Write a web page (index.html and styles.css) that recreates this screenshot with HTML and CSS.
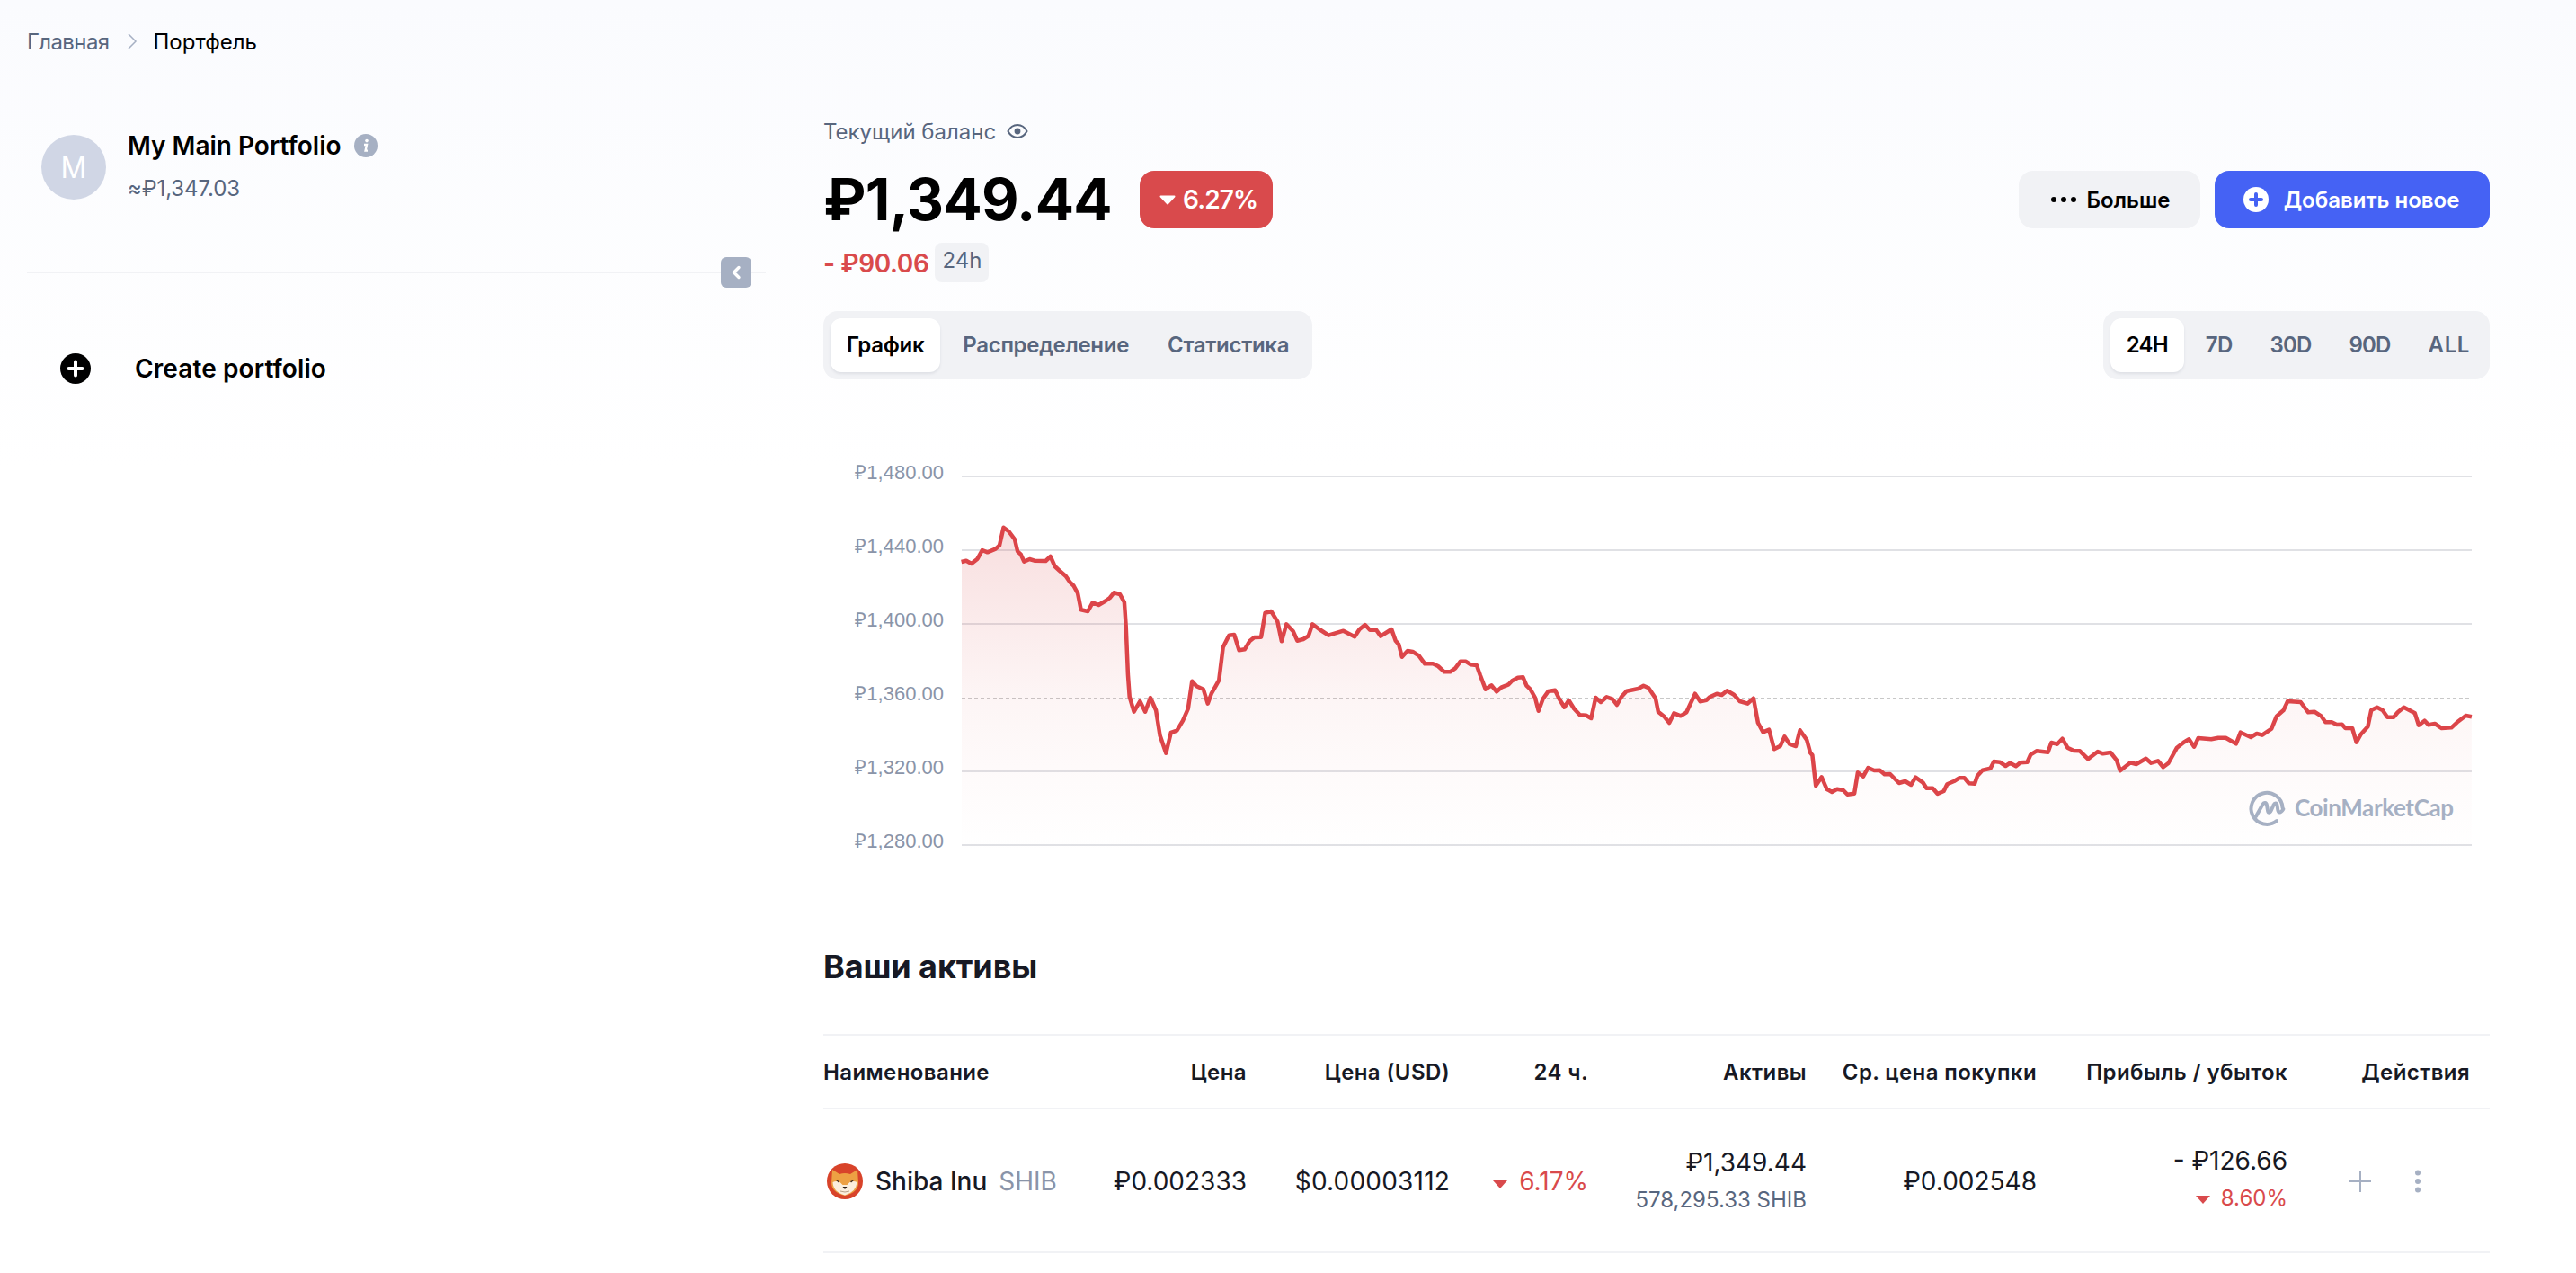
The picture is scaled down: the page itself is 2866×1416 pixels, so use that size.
FILE: index.html
```html
<!DOCTYPE html>
<html lang="ru">
<head>
<meta charset="utf-8">
<title>Портфель</title>
<link rel="stylesheet" href="styles.css">
</head>
<body>
<nav class="crumbs">
  <a class="crumb-link">Главная</a>
  <svg class="crumb-sep" viewBox="0 0 12 20"><path d="M2 2l8 8-8 8"/></svg>
  <span class="crumb-current">Портфель</span>
</nav>
<div class="layout">
  <aside class="sidebar">
    <div class="profile">
      <div class="avatar">M</div>
      <div class="profile-text">
        <div class="profile-name">My Main Portfolio
          <svg class="info" viewBox="0 0 26 26"><circle cx="13" cy="13" r="13"/><circle class="info-mark" cx="14" cy="7.6" r="1.8"/><path class="info-line" d="M11 12h3l-1.4 6.6h2.4"/></svg>
        </div>
        <div class="profile-value">≈₽1,347.03</div>
      </div>
    </div>
    <div class="divider">
      <button class="collapse"><svg viewBox="0 0 12 16"><path d="M9 2.5L3.5 8 9 13.5"/></svg></button>
    </div>
    <div class="create">
      <svg class="plus-circle" viewBox="0 0 34 34"><circle cx="17" cy="17" r="17"/><path d="M17 9.5v15M9.5 17h15"/></svg>
      <span>Create portfolio</span>
    </div>
  </aside>
  <main class="main">
    <div class="balance-label">Текущий баланс
      <svg class="eye" viewBox="0 0 24 18"><path d="M1.5 9C4 4.2 7.7 2 12 2s8 2.200 10.500 7C20 13.800 16.300 16 12 16S4 13.800 1.500 9z"/><circle cx="12" cy="9" r="3.400"/></svg>
    </div>
    <div class="balance-row">
      <div class="balance">₽1,349.44</div>
      <div class="badge"><svg class="tri" viewBox="0 0 20 13"><path d="M2.500 2.500h15L10 10.500z"/></svg>6.27%</div>
      <div class="actions">
        <button class="btn btn-more"><svg class="dots" viewBox="0 0 28 6"><circle cx="3" cy="3" r="3"/><circle cx="14" cy="3" r="3"/><circle cx="25" cy="3" r="3"/></svg>Больше</button>
        <button class="btn btn-add"><svg class="add-icon" viewBox="0 0 28 28"><circle cx="14" cy="14" r="14"/><path d="M14 8v12M8 14h12"/></svg>Добавить новое</button>
      </div>
    </div>
    <div class="change-row">
      <span class="change">- ₽90.06</span>
      <span class="chip">24h</span>
    </div>
    <div class="tabs-row">
      <div class="seg">
        <span class="seg-item seg-on">График</span>
        <span class="seg-item">Распределение</span>
        <span class="seg-item">Статистика</span>
      </div>
      <div class="seg seg-time">
        <span class="seg-item seg-on">24H</span>
        <span class="seg-item">7D</span>
        <span class="seg-item">30D</span>
        <span class="seg-item">90D</span>
        <span class="seg-item seg-all">ALL</span>
      </div>
    </div>
    <svg class="chart" viewBox="916 510 1854 450">
      <defs>
        <linearGradient id="areaFill" gradientUnits="userSpaceOnUse" x1="0" y1="587" x2="0" y2="950">
          <stop offset="0" stop-color="#d94a4c" stop-opacity=".18"/>
          <stop offset=".52" stop-color="#d94a4c" stop-opacity=".055"/>
          <stop offset=".75" stop-color="#d94a4c" stop-opacity=".025"/>
          <stop offset="1" stop-color="#d94a4c" stop-opacity="0"/>
        </linearGradient>
        <path id="priceLine" d="M1069.600 625L1075 623.700L1080.800 627L1087.500 621.700L1092.800 612L1098.600 614.300L1107.600 610.700L1112 606.700L1116.500 586.700L1122.300 591L1129 600L1132.100 613.300L1135.700 616.700L1139.300 624.700L1145.500 622L1150.900 623.700L1163.400 624L1168.700 619L1173.600 630L1179 635L1185.700 640.700L1190.200 647.300L1194.600 651.700L1199.100 660L1202.700 678.300L1210.300 680L1215.600 670.300L1222.300 673L1230.300 668.300L1234.800 665L1239.300 659.300L1246 661L1250.900 670L1252.700 696.700L1254.900 750L1256.700 775L1261.600 791.700L1268.300 780L1274.100 791.700L1279.900 776L1286.100 790L1290.600 818.300L1297.300 837.700L1302.700 815L1309.400 812.700L1316 801.700L1321.800 788.300L1326.300 757.700L1331.200 763.300L1338.800 766.700L1343.700 782.700L1347.700 771.700L1356.200 756.700L1360.700 720L1367.400 706.700L1373.200 706L1378.600 723.300L1384.800 722.300L1390.200 713.300L1395.500 709L1403.100 708.700L1407.600 681.700L1414.300 680L1421.400 691.700L1425.900 713.300L1431.200 694.300L1438.800 702.300L1443.300 712.700L1450 711L1455.800 707.300L1460.200 694.300L1467.900 700L1478.100 706.700L1494.600 701.700L1507.100 708.300L1512.500 700L1518.700 695L1524.100 700.700L1531.200 700.700L1536.100 707.700L1548.200 700L1552.700 712.700L1556.200 716.700L1559.800 730.700L1566 724L1571.800 725L1578.600 729.300L1585.200 738.300L1594.200 738.300L1600 741L1606.900 747.300L1613.400 747.300L1619.100 743.300L1624.900 735.700L1630.600 735.700L1636.400 739.300L1642.900 740L1646.700 750.700L1652.800 766.700L1659.300 762.300L1665.100 769.300L1670.800 764.300L1678.500 761.300L1682.300 757.300L1688.800 753.700L1694.500 753.300L1698.400 762.700L1702.600 766.700L1707.900 776L1711.700 790.700L1716.700 777.300L1722.500 769L1730.100 767.700L1734.700 777.300L1740.500 786.700L1745.400 779L1751.200 788.300L1757.700 795.300L1764.600 795.700L1770.300 799L1775.300 776L1781 781L1787.500 775.300L1794 777.700L1799 784L1804 775L1809.700 768.700L1818.100 767L1822.700 766L1828.500 762.700L1834.200 765.300L1841.900 776.700L1844.900 791.700L1851.800 797.300L1857.200 804L1862.500 793.300L1869.800 796.300L1876.300 792.300L1880.500 783.300L1885.900 771.700L1891.600 780.300L1898.500 778.700L1902.300 775.300L1910 771.700L1915.700 773L1921.500 768.300L1929.100 772.700L1935.600 780L1944.400 782.700L1950.900 776.700L1955.900 804L1961.600 814.300L1968.200 811.700L1973.900 833.300L1980.800 829.700L1985.400 819.300L1991.100 827.700L1998 830L2002.600 812.300L2010.300 823.300L2014.100 837.300L2016.400 840L2020.200 874L2026.700 864.300L2032.400 877.700L2038.200 881L2043.900 877.700L2050.800 879L2055.400 883.700L2063.100 882.700L2066.900 859.300L2073 863.700L2078.400 854L2085.300 857L2091.400 856.700L2096.700 861.300L2102.900 861L2112.800 871L2119.700 869L2126.200 873L2131.200 864.700L2139.600 870.700L2143.400 876.700L2150.300 876.700L2155.700 883L2162.600 880L2166.400 872.300L2174 869L2179.800 865.300L2185.500 865.300L2190.500 871.300L2197 871.700L2200 863L2205.700 856.700L2214.500 854.700L2218.400 847L2224.900 847.700L2231.400 852L2236.400 848.700L2242.900 852.300L2247.800 848.300L2255.500 847.700L2259.300 839.300L2265.800 835.300L2278.500 836.700L2282.300 826L2288.800 827.700L2294.500 821.700L2300.300 831.700L2307.200 835L2314 835.300L2323.200 844.300L2333.900 836L2339.700 838.300L2348.100 837L2355 845.700L2358.800 857.300L2370.300 848.300L2376.800 850L2387.500 843.700L2393.300 848.700L2400.900 846.300L2406.700 853.300L2412.400 849L2422 831.700L2429.600 825.700L2435.400 822.300L2441.100 830.700L2445.700 821L2460.200 822.300L2467.900 820.700L2476.300 820.700L2487.800 827.300L2492.800 814.700L2504.200 820L2510.800 816L2516.900 817.700L2527.200 810.700L2532.900 796.700L2540.600 790L2545.200 780L2559.700 781L2568.100 792.300L2575 791.700L2582.700 796.700L2587.300 803.300L2594.200 803.300L2599.900 806L2605.700 805.700L2609.500 810L2617.100 810L2621.700 825.700L2626.700 816.700L2634.400 808.300L2638.200 790L2644.700 786.700L2650.800 790L2656.200 797.700L2663.100 797.700L2667.700 792.300L2674.500 786.700L2686.800 793.300L2691 806.700L2697.500 801.700L2702.100 806.300L2709 805L2716.600 810L2727.400 809.300L2733.900 803.300L2743.400 796L2749.900 797.300"/>
      </defs>
      <g class="grid">
        <line x1="1070" x2="2750" y1="530" y2="530"/>
        <line x1="1070" x2="2750" y1="612" y2="612"/>
        <line x1="1070" x2="2750" y1="694" y2="694"/>
        <line class="grid-base" x1="1070" x2="2750" y1="777" y2="777"/>
        <line x1="1070" x2="2750" y1="858" y2="858"/>
        <line x1="1070" x2="2750" y1="940" y2="940"/>
      </g>
      <g class="axis">
        <text x="1050" y="533">₽1,480.00</text>
        <text x="1050" y="615">₽1,440.00</text>
        <text x="1050" y="697">₽1,400.00</text>
        <text x="1050" y="779">₽1,360.00</text>
        <text x="1050" y="861">₽1,320.00</text>
        <text x="1050" y="943">₽1,280.00</text>
      </g>
      <rect class="area" x="1070" y="587" width="1680" height="363" clip-path="url(#underLine)"/>
      <clipPath id="underLine">
        <path d="M1069.600 625L1075 623.700L1080.800 627L1087.500 621.700L1092.800 612L1098.600 614.300L1107.600 610.700L1112 606.700L1116.500 586.700L1122.300 591L1129 600L1132.100 613.300L1135.700 616.700L1139.300 624.700L1145.500 622L1150.900 623.700L1163.400 624L1168.700 619L1173.600 630L1179 635L1185.700 640.700L1190.200 647.300L1194.600 651.700L1199.100 660L1202.700 678.300L1210.300 680L1215.600 670.300L1222.300 673L1230.300 668.300L1234.800 665L1239.300 659.300L1246 661L1250.900 670L1252.700 696.700L1254.900 750L1256.700 775L1261.600 791.700L1268.300 780L1274.100 791.700L1279.900 776L1286.100 790L1290.600 818.300L1297.300 837.700L1302.700 815L1309.400 812.700L1316 801.700L1321.800 788.300L1326.300 757.700L1331.200 763.300L1338.800 766.700L1343.700 782.700L1347.700 771.700L1356.200 756.700L1360.700 720L1367.400 706.700L1373.200 706L1378.600 723.300L1384.800 722.300L1390.200 713.300L1395.500 709L1403.100 708.700L1407.600 681.700L1414.300 680L1421.400 691.700L1425.900 713.300L1431.200 694.300L1438.800 702.300L1443.300 712.700L1450 711L1455.800 707.300L1460.200 694.300L1467.900 700L1478.100 706.700L1494.600 701.700L1507.100 708.300L1512.500 700L1518.700 695L1524.100 700.700L1531.200 700.700L1536.100 707.700L1548.200 700L1552.700 712.700L1556.200 716.700L1559.800 730.700L1566 724L1571.800 725L1578.600 729.300L1585.200 738.300L1594.200 738.300L1600 741L1606.900 747.300L1613.400 747.300L1619.100 743.300L1624.900 735.700L1630.600 735.700L1636.400 739.300L1642.900 740L1646.700 750.700L1652.800 766.700L1659.300 762.300L1665.100 769.300L1670.800 764.300L1678.500 761.300L1682.300 757.300L1688.800 753.700L1694.500 753.300L1698.400 762.700L1702.600 766.700L1707.900 776L1711.700 790.700L1716.700 777.300L1722.500 769L1730.100 767.700L1734.700 777.300L1740.500 786.700L1745.400 779L1751.200 788.300L1757.700 795.300L1764.600 795.700L1770.300 799L1775.300 776L1781 781L1787.500 775.300L1794 777.700L1799 784L1804 775L1809.700 768.700L1818.100 767L1822.700 766L1828.500 762.700L1834.200 765.300L1841.900 776.700L1844.900 791.700L1851.800 797.300L1857.200 804L1862.500 793.300L1869.800 796.300L1876.300 792.300L1880.500 783.300L1885.900 771.700L1891.600 780.300L1898.500 778.700L1902.300 775.300L1910 771.700L1915.700 773L1921.500 768.300L1929.100 772.700L1935.600 780L1944.400 782.700L1950.900 776.700L1955.900 804L1961.600 814.300L1968.200 811.700L1973.900 833.300L1980.800 829.700L1985.400 819.300L1991.100 827.700L1998 830L2002.600 812.300L2010.300 823.300L2014.100 837.300L2016.400 840L2020.200 874L2026.700 864.300L2032.400 877.700L2038.200 881L2043.900 877.700L2050.800 879L2055.400 883.700L2063.100 882.700L2066.900 859.300L2073 863.700L2078.400 854L2085.300 857L2091.400 856.700L2096.700 861.300L2102.900 861L2112.800 871L2119.700 869L2126.200 873L2131.200 864.700L2139.600 870.700L2143.400 876.700L2150.300 876.700L2155.700 883L2162.600 880L2166.400 872.300L2174 869L2179.800 865.300L2185.500 865.300L2190.500 871.300L2197 871.700L2200 863L2205.700 856.700L2214.500 854.700L2218.400 847L2224.900 847.700L2231.400 852L2236.400 848.700L2242.900 852.300L2247.800 848.300L2255.500 847.700L2259.300 839.300L2265.800 835.300L2278.500 836.700L2282.300 826L2288.800 827.700L2294.500 821.700L2300.300 831.700L2307.200 835L2314 835.300L2323.200 844.300L2333.900 836L2339.700 838.300L2348.100 837L2355 845.700L2358.800 857.300L2370.300 848.300L2376.800 850L2387.500 843.700L2393.300 848.700L2400.900 846.300L2406.700 853.300L2412.400 849L2422 831.700L2429.600 825.700L2435.400 822.300L2441.100 830.700L2445.700 821L2460.200 822.300L2467.900 820.700L2476.300 820.700L2487.800 827.300L2492.800 814.700L2504.200 820L2510.800 816L2516.900 817.700L2527.200 810.700L2532.900 796.700L2540.600 790L2545.200 780L2559.700 781L2568.100 792.300L2575 791.700L2582.700 796.700L2587.300 803.300L2594.200 803.300L2599.900 806L2605.700 805.700L2609.500 810L2617.100 810L2621.700 825.700L2626.700 816.700L2634.400 808.300L2638.200 790L2644.700 786.700L2650.800 790L2656.200 797.700L2663.100 797.700L2667.700 792.300L2674.500 786.700L2686.800 793.300L2691 806.700L2697.500 801.700L2702.100 806.300L2709 805L2716.600 810L2727.400 809.300L2733.900 803.300L2743.400 796L2749.900 797.300V950H1069.600Z"/>
      </clipPath>
      <use class="price" href="#priceLine"/>
      <g class="cmc-logo">
        <path d="M2533 913A17.500 17.500 0 1 1 2539.500 898.500"/>
        <path d="M2510 908l7-12.500c2-3.500 4.500-3 5 0l1 6c.6 3 2.500 3 3.800 0l2.700-6c1.500-3 3.500-2.500 4 0l.8 5.500c.5 3 3 4 6-1"/>
      </g>
      <text class="cmc-text" x="2553" y="908">CoinMarketCap</text>
    </svg>
    <h2 class="assets-title">Ваши активы</h2>
    <div class="table">
      <div class="tr th">
        <div class="td td-name">Наименование</div>
        <div class="td">Цена</div>
        <div class="td">Цена (USD)</div>
        <div class="td">24 ч.</div>
        <div class="td">Активы</div>
        <div class="td">Ср. цена покупки</div>
        <div class="td">Прибыль / убыток</div>
        <div class="td">Действия</div>
      </div>
      <div class="tr row">
        <div class="td td-name">
          <svg class="coin" viewBox="0 0 40 40">
            <circle cx="20" cy="20" r="20" fill="#d8432a"/>
            <path d="M6 7l8 5q6-2 12 0l8-5 1 15q0 10-15 14Q5 32 5 22z" fill="#eda043"/>
            <path d="M6.500 21q4-2 8 0l3 3h5l3-3q4-2 8 0-1 11-13.500 14.500Q7 32 6.500 21z" fill="#fbeedd"/>
            <path d="M9 18l5 2-1 1.500zM31 18l-5 2 1 1.500z" fill="#3b2a20"/>
            <path d="M17.500 26h5l-2.500 3z" fill="#2b1d15"/>
            <path d="M15 31q5 2 10 0" class="coin-mouth"/>
          </svg>
          <span class="coin-name">Shiba Inu</span>
          <span class="coin-sym">SHIB</span>
        </div>
        <div class="td">₽0.002333</div>
        <div class="td td-usd">$0.00003112</div>
        <div class="td td-red"><svg class="tri-sm" viewBox="0 0 20 13"><path d="M2 2h16l-8 9z"/></svg>6.17%</div>
        <div class="td td-stack">
          <div>₽1,349.44</div>
          <div class="sub">578,295.33 SHIB</div>
        </div>
        <div class="td">₽0.002548</div>
        <div class="td td-stack td-profit">
          <div>- ₽126.66</div>
          <div class="sub sub-red"><svg class="tri-sm" viewBox="0 0 20 13"><path d="M2 2h16l-8 9z"/></svg>8.60%</div>
        </div>
        <div class="td td-actions">
          <svg class="act-plus" viewBox="0 0 26 26"><path d="M13 1v24M1 13h24"/></svg>
          <svg class="act-more" viewBox="0 0 8 26"><circle cx="4" cy="3.500" r="3"/><circle cx="4" cy="13" r="3"/><circle cx="4" cy="22.500" r="3"/></svg>
        </div>
      </div>
    </div>
  </main>
</div>
</body>
</html>
```

FILE: styles.css
```css
* { box-sizing: border-box; }
html, body { margin: 0; height: 100%; }
body {
  font-family: Inter, "Noto Sans", "Liberation Sans", sans-serif;
  color: #000;
  background: linear-gradient(#fafbfe 0, #fff 520px);
  overflow: hidden;
}

.crumbs {
  height: 92px;
  padding-left: 30px;
  display: flex;
  align-items: center;
  font-size: 24px;
}
.crumb-link { color: #58667e; letter-spacing: -.6px; }
.crumb-sep { width: 12px; height: 20px; margin: 0 18px 0 19px; fill: none; stroke: #a6b0c3; stroke-width: 1.5; }
.crumb-current { color: #000; }

.layout { display: flex; gap: 64px; padding: 0 96px 0 30px; }
.sidebar { width: 822px; flex: none; padding-top: 58px; }
.main { flex: 1; min-width: 0; }

.profile { display: flex; gap: 24px; padding-left: 16px; height: 72px; }
.avatar {
  width: 72px; height: 72px; border-radius: 50%;
  background: #d0d6e5; color: #fff;
  display: flex; align-items: center; justify-content: center;
  font-size: 32px;
}
.profile-text { display: flex; flex-direction: column; }
.profile-name {
  display: flex; align-items: center; gap: 14px;
  font-size: 28px; font-weight: 600; line-height: 26px; height: 26px;
  margin-top: -1px;
}
.info { width: 26px; height: 26px; fill: #a6b0c3; }
.info-mark { fill: #fff; }
.info-line { fill: none; stroke: #fff; stroke-width: 2.400; }
.profile-value { margin-top: 21px; font-size: 24px; line-height: 28px; color: #58667e; letter-spacing: -.1px; }

.divider { position: relative; margin-top: 80px; height: 2px; background: #f1f2f5; }
.collapse {
  position: absolute; left: 772px; top: -16px;
  width: 34px; height: 34px; padding: 0; border: 0; border-radius: 6px;
  background: #a6b0c3;
  display: flex; align-items: center; justify-content: center;
}
.collapse svg { width: 12px; height: 16px; fill: none; stroke: #fff; stroke-width: 3.400; stroke-linecap: round; stroke-linejoin: round; }

.create { margin-top: 89px; padding-left: 37px; display: flex; align-items: center; gap: 49px; height: 34px; font-size: 28px; font-weight: 600; letter-spacing: .1px; }
.plus-circle { width: 34px; height: 34px; fill: #000; }
.plus-circle path { fill: none; stroke: #fff; stroke-width: 4; stroke-linecap: round; }

.balance-label { margin-top: 38px; height: 32px; display: flex; align-items: center; gap: 12px; font-size: 24px; color: #58667e; }
.eye { width: 24px; height: 18px; fill: none; stroke: #58667e; stroke-width: 2; }
.eye circle { fill: #58667e; stroke: none; }

.balance-row { margin-top: 28px; height: 64px; display: flex; align-items: center; }
.balance { font-size: 64px; font-weight: 700; line-height: 64px; letter-spacing: -.7px; width: 352px; }
.badge {
  width: 148px; height: 64px; border-radius: 16px;
  background: #d94a4c; color: #fff;
  display: flex; align-items: center; gap: 7px; padding-left: 21px;
  font-size: 28px; font-weight: 600; letter-spacing: -.9px;
}
.tri { width: 20px; height: 13px; fill: #fff; stroke: #fff; stroke-width: 2; stroke-linejoin: round; }
.actions { margin-left: auto; display: flex; gap: 16px; }
.btn {
  height: 64px; border: 0; border-radius: 16px; font: inherit;
  font-size: 24px; font-weight: 600;
  display: flex; align-items: center; justify-content: center;
}
.btn-more { width: 202px; background: #f1f2f5; color: #000; gap: 12px; padding-left: 8px; }
.dots { width: 28px; height: 6px; fill: #000; }
.btn-add { width: 306px; background: #4562f4; color: #fff; gap: 17px; padding-left: 4px; }
.add-icon { width: 28px; height: 28px; fill: #fff; }
.add-icon path { fill: none; stroke: #4562f4; stroke-width: 4; stroke-linecap: round; }

.change-row { margin-top: 16px; height: 44px; display: flex; align-items: center; gap: 7px; }
.change { font-size: 28px; font-weight: 600; letter-spacing: -.4px; color: #d94a4c; padding-top: 2px; }
.chip { width: 60px; height: 44px; border-radius: 8px; background: #f1f2f5; color: #58667e; font-size: 24px; display: flex; align-items: center; justify-content: center; padding-bottom: 6px; }

.tabs-row { margin-top: 32px; display: flex; justify-content: space-between; }
.seg { height: 76px; padding: 8px; border-radius: 16px; background: #f1f2f5; display: flex; gap: 7px; }
.seg-item { height: 60px; padding: 0 18px 2px; border-radius: 12px; display: flex; align-items: center; font-size: 24px; font-weight: 600; letter-spacing: -.3px; color: #58667e; white-space: nowrap; }
.seg-on { background: #fff; color: #000; box-shadow: 0 2px 3px rgba(88, 102, 126, .12); }
.seg-time { gap: 6px; }
.seg-time .seg-item { letter-spacing: -.8px; }
.seg-time .seg-all { letter-spacing: .6px; padding-right: 14px; }

.chart { display: block; width: 1854px; height: 450px; margin-top: 88px; }
.grid line { stroke: #e0e1e5; stroke-width: 2; }
.grid .grid-base { stroke: #c8c8c8; stroke-dasharray: 4 3; }
.axis text { font-family: "Liberation Sans", Arial, sans-serif; font-size: 22px; fill: #8a94a8; text-anchor: end; }
.area { fill: url(#areaFill); }
.price { fill: none; stroke: #dc4549; stroke-width: 4.500; stroke-linejoin: round; }
.cmc-logo path { fill: none; stroke: #a6b0c3; stroke-width: 4; stroke-linecap: round; stroke-linejoin: round; }
.cmc-text { font-family: Lato, sans-serif; font-size: 26px; font-weight: 700; fill: #a6b0c3; letter-spacing: -.4px; }

.assets-title { margin: 93px 0 0; font-size: 36px; line-height: 44px; font-weight: 700; letter-spacing: -.1px; color: #171924; }

.table { margin-top: 53px; }
.tr {
  display: grid;
  grid-template-columns: 280px 191px 226px 154px 243px 256px 279px 203px;
  align-items: center;
  padding-right: 22px;
  border-bottom: 2px solid #f1f2f5;
  color: #171924;
}
.th { height: 84px; border-top: 2px solid #f1f2f5; font-size: 24px; font-weight: 600; letter-spacing: .4px; }
.row { height: 160px; padding-top: 2px; font-size: 28px; }
.td { text-align: right; white-space: nowrap; }
.td-name { text-align: left; display: flex; align-items: center; }
.coin { width: 40px; height: 40px; margin: 0 14px 0 4px; }
.coin-mouth { fill: none; stroke: #b9a38a; stroke-width: 1; }
.coin-name { font-weight: 500; }
.coin-sym { margin-left: 13px; color: #8a94a8; }
.td-usd { letter-spacing: .2px; }
.td-red { color: #d94a4c; }
.tri-sm { width: 20px; height: 13px; fill: #d94a4c; margin-right: 11px; }
.sub { margin-top: 8px; font-size: 24px; line-height: 34px; color: #58667e; }
.td-stack > div:first-child { line-height: 34px; }
.td-profit { padding-bottom: 4px; }
.sub-red { color: #d94a4c; }
.sub-red .tri-sm { margin-right: 10px; }
.td-actions { display: flex; align-items: center; justify-content: flex-start; padding-left: 68px; gap: 47px; }
.act-plus { width: 26px; height: 26px; fill: none; stroke: #a6b0c3; stroke-width: 2; }
.act-more { width: 8px; height: 26px; fill: #a6b0c3; }
```
